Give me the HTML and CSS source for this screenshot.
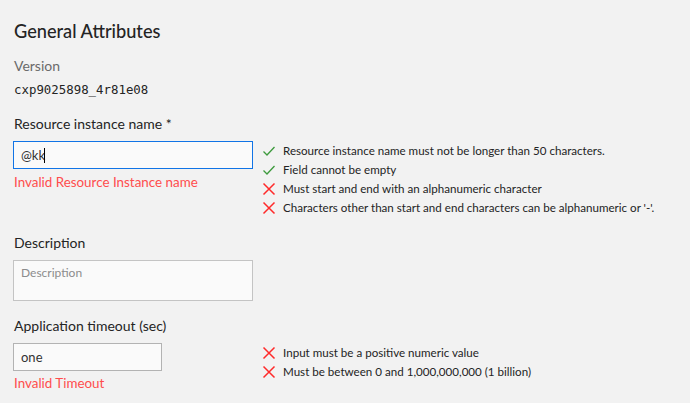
FILE: index.html
```html
<!DOCTYPE html>
<html>
<head>
<meta charset="utf-8">
<link rel="stylesheet" href="styles.css">
</head>
<body>
<div class="page">
  <h1 class="title">General Attributes</h1>
  <div class="label muted">Version</div>
  <div class="value">cxp9025898_4r81e08</div>

  <div class="label field-label">Resource instance name *</div>
  <div class="row">
    <div class="col">
      <div class="input focused"><span>@kk</span><span class="caret"></span></div>
      <div class="error">Invalid Resource Instance name</div>
    </div>
    <ul class="rules">
      <li><svg class="ic" viewBox="0 0 14 14"><path d="M1.5 7.5 L5 11 L12.5 3" class="ok"/></svg>Resource instance name must not be longer than 50 characters.</li>
      <li><svg class="ic" viewBox="0 0 14 14"><path d="M1.5 7.5 L5 11 L12.5 3" class="ok"/></svg>Field cannot be empty</li>
      <li><svg class="ic" viewBox="0 0 14 14"><path d="M1.5 1.5 L12.5 12.5 M12.5 1.5 L1.5 12.5" class="bad"/></svg>Must start and end with an alphanumeric character</li>
      <li><svg class="ic" viewBox="0 0 14 14"><path d="M1.5 1.5 L12.5 12.5 M12.5 1.5 L1.5 12.5" class="bad"/></svg>Characters other than start and end characters can be alphanumeric or '-'.</li>
    </ul>
  </div>

  <div class="label field-label desc-label">Description</div>
  <div class="textarea">Description</div>

  <div class="label field-label timeout-label">Application timeout (sec)</div>
  <div class="row">
    <div class="col">
      <div class="input small"><span>one</span></div>
      <div class="error tight">Invalid Timeout</div>
    </div>
    <ul class="rules">
      <li><svg class="ic" viewBox="0 0 14 14"><path d="M1.5 1.5 L12.5 12.5 M12.5 1.5 L1.5 12.5" class="bad"/></svg>Input must be a positive numeric value</li>
      <li><svg class="ic" viewBox="0 0 14 14"><path d="M1.5 1.5 L12.5 12.5 M12.5 1.5 L1.5 12.5" class="bad"/></svg>Must be between 0 and 1,000,000,000 (1 billion)</li>
    </ul>
  </div>
</div>
</body>
</html>
```

FILE: styles.css
```css
html, body {
  margin: 0;
  padding: 0;
  background: #f2f2f2;
}
body {
  font-family: "Lato", "Noto Sans", sans-serif;
  color: #242424;
}
.page {
  padding: 19px 13px 0 13px;
  display: flex;
  flex-direction: column;
  align-items: flex-start;
}
.title {
  margin: 0 0 0 1px;
  font-size: 18.2px;
  line-height: 24px;
  font-weight: 500;
  color: #242424;
}
.label {
  font-size: 14px;
  line-height: 20px;
  margin-left: 1px;
}
.muted {
  color: #6a6a6a;
  margin-top: 13px;
}
.value {
  font-family: "DejaVu Sans Mono", monospace;
  font-size: 12.4px;
  line-height: 20px;
  margin-top: 4px;
  margin-left: 1px;
}
.field-label {
  margin-top: 14px;
}
.desc-label {
  margin-top: 16px;
}
.timeout-label {
  margin-top: 15px;
}
.row {
  display: grid;
  grid-template-columns: 240px auto;
  column-gap: 9px;
  margin-top: 7px;
  align-items: start;
}
.col {
  display: flex;
  flex-direction: column;
}
.input {
  box-sizing: border-box;
  height: 28px;
  border: 1px solid #b3b3b3;
  background: #fafafa;
  padding: 0 7px;
  display: flex;
  align-items: center;
  font-size: 13px;
  color: #333333;
}
.input.focused {
  border-color: #1174e6;
  width: 240px;
}
.input.small {
  width: 149px;
}
.caret {
  display: inline-block;
  width: 1px;
  height: 15px;
  background: #000;
  margin-left: -1px;
}
.error {
  color: #ff4d4d;
  font-size: 13.4px;
  line-height: 18px;
  margin-top: 4px;
  margin-left: 1px;
}
.error.tight {
  margin-top: 3px;
}
.textarea {
  box-sizing: border-box;
  width: 240px;
  height: 41px;
  margin-top: 7px;
  border: 1px solid #c4c4c4;
  background: #fafafa;
  padding: 4px 7px;
  font-size: 12px;
  line-height: 16px;
  color: #8c8c8c;
}
.rules {
  list-style: none;
  margin: 0;
  padding: 0;
}
.rules li {
  display: flex;
  align-items: center;
  height: 19px;
  font-size: 11.6px;
  color: #242424;
  white-space: nowrap;
}
.ic {
  width: 14px;
  height: 14px;
  margin-right: 7px;
  flex: none;
}
.ok {
  fill: none;
  stroke: #3d9a3d;
  stroke-width: 1.3;
}
.bad {
  fill: none;
  stroke: #ff2a2a;
  stroke-width: 1.5;
}
```
